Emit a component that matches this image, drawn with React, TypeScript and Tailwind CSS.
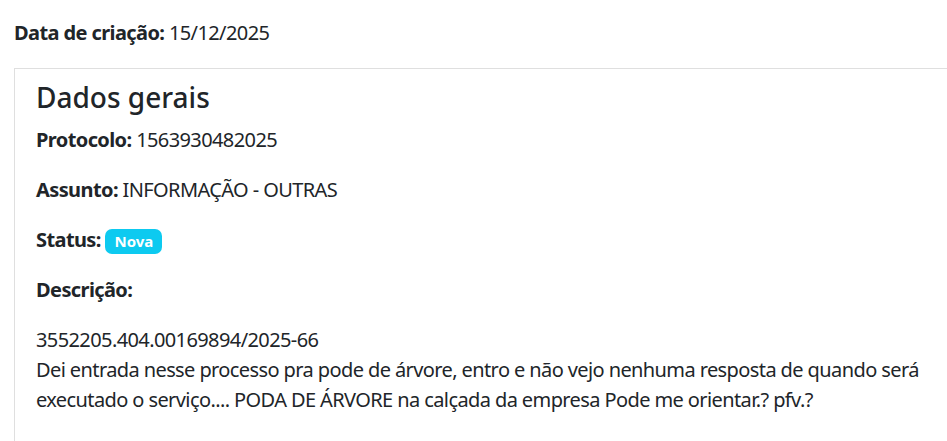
export default function App() {
  return (
    <div
      className="h-[441px] w-[947px] overflow-hidden bg-white text-[20px] leading-[30px] tracking-[-0.6px] text-[#212529]"
      style={{ fontFamily: '"Noto Sans", "Open Sans", sans-serif' }}
    >
      <div className="pl-[14px] pt-[18px]">
        <p className="mb-[20px]">
          <strong className="font-bold">Data de criação:</strong> 15/12/2025
        </p>
        <div className="w-[1000px] border border-[#dfdfdf] px-[21px] pt-[11px] pb-[40px]">
          <h4 className="mb-[11px] text-[28px] leading-[34px] font-medium tracking-normal">Dados gerais</h4>
          <p className="mb-[20px]">
            <strong className="font-bold">Protocolo:</strong> 1563930482025
          </p>
          <p className="mb-[20px]">
            <strong className="font-bold">Assunto:</strong> INFORMAÇÃO - OUTRAS
          </p>
          <p className="mb-[20px]">
            <strong className="font-bold">Status:</strong>{" "}
            <span className="inline-block rounded-[7px] bg-[#0dcaf0] px-[9px] py-[5px] align-baseline text-[15px] leading-[15px] font-bold tracking-normal text-white">
              Nova
            </span>
          </p>
          <p className="mb-[20px]">
            <strong className="font-bold">Descrição:</strong>
          </p>
          <p>
            3552205.404.00169894/2025-66
            <br />
            Dei entrada nesse processo pra pode de árvore, entro e não vejo nenhuma resposta de quando será
            <br />
            executado o serviço.... PODA DE ÁRVORE na calçada da empresa Pode me orientar.? pfv.?
          </p>
        </div>
      </div>
    </div>
  );
}
